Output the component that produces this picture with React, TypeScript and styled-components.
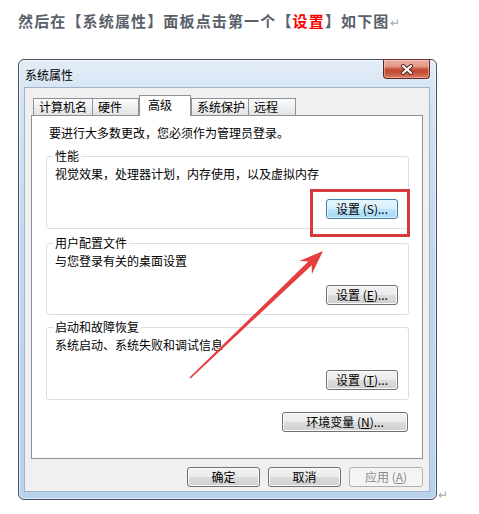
import React from "react";
import styled, { createGlobalStyle, css } from "styled-components";

const GlobalStyle = createGlobalStyle`
  html, body { margin: 0; padding: 0; background: #ffffff; }
  body { font-family: "Noto Sans CJK SC", "Noto Sans", sans-serif; }
  * { box-sizing: border-box; }
`;

const Page = styled.div`
  position: relative;
  width: 479px;
  height: 514px;
  padding: 11px 0 0 18px;
  overflow: hidden;
`;

const Heading = styled.p`
  margin: 0;
  height: 20px;
  line-height: 20px;
  font-size: 15px;
  font-weight: 700;
  color: #5a616b;
  letter-spacing: 1.15px;
  white-space: nowrap;
`;

const Red = styled.span`
  color: #ff0000;
`;

const ReturnMark = styled.span`
  font-weight: 400;
  font-size: 12px;
  line-height: 12px;
  color: #a6a6a6;
  margin-left: 1px;
  letter-spacing: 0;
`;

const WindowRow = styled.div`
  display: flex;
  align-items: flex-end;
  margin-top: 28px;
`;

const Window = styled.div`
  width: 419px;
  height: 441px;
  border: 1px solid #465263;
  border-radius: 6px;
  background: linear-gradient(
    180deg,
    #e4edf7 0%,
    #d6e4f3 7%,
    #c3d8ef 40%,
    #b9d2ec 100%
  );
  box-shadow: inset 0 0 0 1px rgba(255, 255, 255, 0.55);
  display: flex;
  flex-direction: column;
  padding: 0 6px 7px 5px;
`;

const TitleBar = styled.div`
  height: 27px;
  display: flex;
  justify-content: space-between;
  align-items: flex-start;
  flex-shrink: 0;
`;

const TitleText = styled.span`
  margin: 9px 0 0 1px;
  font-size: 12px;
  line-height: 12px;
  color: #000;
`;

const CloseButton = styled.div`
  width: 47px;
  height: 20px;
  margin-top: -1px;
  border: 1px solid #5a2a24;
  border-top-color: #6e3a32;
  border-radius: 0 0 4px 4px;
  background: linear-gradient(
    180deg,
    #eab0a3 0%,
    #e39a89 35%,
    #c8553f 50%,
    #c24a35 65%,
    #d77b62 100%
  );
  box-shadow: inset 0 0 0 1px rgba(255, 220, 210, 0.45);
  display: flex;
  align-items: center;
  justify-content: center;
`;

const Client = styled.div`
  flex: 1;
  background: #f0f0f0;
  border: 1px solid #9fb3ca;
  padding: 7px 6px 0 6px;
  display: flex;
  flex-direction: column;
`;

const TabStrip = styled.div`
  display: flex;
  align-items: flex-end;
  height: 21px;
  padding-left: 2px;
  margin-bottom: -1px;
  position: relative;
  z-index: 1;
`;

const Tab = styled.div<{ $w: number; $active?: boolean; $ml?: number }>`
  width: ${(p) => p.$w}px;
  margin-left: ${(p) => p.$ml ?? 0}px;
  height: 17px;
  margin-bottom: 1px;
  border: 1px solid #8e9198;
  border-bottom: none;
  background: linear-gradient(180deg, #fbfbfb 0%, #f0f0f0 50%, #e2e2e2 100%);
  font-size: 12px;
  line-height: 15px;
  color: #000;
  padding-left: 5px;
  white-space: nowrap;
  ${(p) =>
    p.$active &&
    css`
      height: 21px;
      margin-bottom: 0;
      background: #ffffff;
      line-height: 18px;
      padding-left: 8px;
    `}
`;

const Panel = styled.div`
  height: 344px;
  border: 1px solid #8e9198;
  background: #ffffff;
  padding: 9px 13px 0 14px;
  display: flex;
  flex-direction: column;
`;

const Intro = styled.div`
  margin-left: 3px;
  height: 16px;
  line-height: 16px;
  font-size: 12px;
  color: #000;
`;

const GroupBox = styled.div<{ $mt: number; $h: number }>`
  position: relative;
  margin-top: ${(p) => p.$mt}px;
  height: ${(p) => p.$h}px;
  border: 1px solid #d5dfe5;
  border-radius: 3px;
  padding: 9px 10px 9px 8px;
  display: flex;
  flex-direction: column;
  justify-content: space-between;
`;

const Legend = styled.span`
  position: absolute;
  top: -9px;
  left: 6px;
  padding: 0 2px;
  background: #ffffff;
  font-size: 12px;
  line-height: 16px;
  color: #000;
`;

const Desc = styled.div`
  font-size: 12px;
  line-height: 16px;
  color: #000;
`;

const Button = styled.button<{ $w: number; $focus?: boolean }>`
  width: ${(p) => p.$w}px;
  height: 20px;
  padding: 0;
  border: 1px solid #707070;
  border-radius: 3px;
  background: linear-gradient(
    180deg,
    #f2f2f2 0%,
    #ebebeb 49%,
    #dddddd 50%,
    #cfcfcf 100%
  );
  box-shadow: inset 0 0 0 1px #fbfbfb;
  font-family: "Noto Sans CJK SC", "Noto Sans", sans-serif;
  font-size: 12px;
  line-height: 18px;
  color: #000;
  white-space: nowrap;
  flex-shrink: 0;
  ${(p) =>
    p.$focus &&
    css`
      border-color: #3c7fb1;
      background: linear-gradient(
        180deg,
        #e8f6fd 0%,
        #d6effc 49%,
        #bde5fb 50%,
        #a5d8f4 100%
      );
      box-shadow: inset 0 0 0 1px #dff3fd;
    `}
  &:disabled {
    border-color: #adb2b5;
    background: #f4f4f4;
    box-shadow: none;
    color: #8a8a8a;
  }
`;

const GroupButton = styled(Button)`
  align-self: flex-end;
`;

const EnvRow = styled.div`
  display: flex;
  justify-content: flex-end;
  margin-top: 12px;
  padding-right: 1px;
`;

const FooterRow = styled.div`
  display: flex;
  justify-content: flex-end;
  gap: 8px;
  margin-top: 8px;
`;

const Key = styled.span`
  text-decoration: underline;
`;

const Overlay = styled.svg`
  position: absolute;
  top: 0;
  left: 0;
  pointer-events: none;
`;

const groups = [
  {
    title: "性能",
    desc: "视觉效果，处理器计划，内存使用，以及虚拟内存",
    key: "S",
    underline: false,
    focus: true,
    mt: 15,
    h: 73,
  },
  {
    title: "用户配置文件",
    desc: "与您登录有关的桌面设置",
    key: "E",
    underline: true,
    focus: false,
    mt: 14,
    h: 72,
  },
  {
    title: "启动和故障恢复",
    desc: "系统启动、系统失败和调试信息",
    key: "T",
    underline: true,
    focus: false,
    mt: 12,
    h: 73,
  },
];

const tabs = [
  { label: "计算机名", w: 60, ml: 0 },
  { label: "硬件", w: 47, ml: -1 },
  { label: "高级", w: 52, ml: 0, active: true },
  { label: "系统保护", w: 58, ml: 0 },
  { label: "远程", w: 48, ml: -1 },
];

export default function App() {
  return (
    <>
      <GlobalStyle />
      <Page>
        <Heading>
          然后在【系统属性】面板点击第一个【<Red>设置</Red>】如下图
          <ReturnMark>↵</ReturnMark>
        </Heading>
        <WindowRow>
          <Window>
            <TitleBar>
              <TitleText>系统属性</TitleText>
              <CloseButton>
                <svg width="14" height="11" viewBox="0 0 14 11">
                  <path
                    d="M3 2 L11 9 M11 2 L3 9"
                    stroke="#4a2620"
                    strokeWidth="4"
                    strokeLinecap="round"
                  />
                  <path
                    d="M3 2 L11 9 M11 2 L3 9"
                    stroke="#ffffff"
                    strokeWidth="2.2"
                    strokeLinecap="round"
                  />
                </svg>
              </CloseButton>
            </TitleBar>
            <Client>
              <TabStrip>
                {tabs.map((t) => (
                  <Tab key={t.label} $w={t.w} $ml={t.ml} $active={t.active}>
                    {t.label}
                  </Tab>
                ))}
              </TabStrip>
              <Panel>
                <Intro>要进行大多数更改，您必须作为管理员登录。</Intro>
                {groups.map((g) => (
                  <GroupBox key={g.title} $mt={g.mt} $h={g.h}>
                    <Legend>{g.title}</Legend>
                    <Desc>{g.desc}</Desc>
                    <GroupButton $w={72} $focus={g.focus}>
                      设置 ({g.underline ? <Key>{g.key}</Key> : g.key})...
                    </GroupButton>
                  </GroupBox>
                ))}
                <EnvRow>
                  <Button $w={126}>
                    环境变量 (<Key>N</Key>)...
                  </Button>
                </EnvRow>
              </Panel>
              <FooterRow>
                <Button $w={73}>确定</Button>
                <Button $w={73}>取消</Button>
                <Button $w={74} disabled>
                  应用 (<Key>A</Key>)
                </Button>
              </FooterRow>
            </Client>
          </Window>
          <ReturnMark>↵</ReturnMark>
        </WindowRow>
        <Overlay width="479" height="514" viewBox="0 0 479 514">
          <rect
            x="311.5"
            y="190.5"
            width="97"
            height="45"
            fill="none"
            stroke="#d8393c"
            strokeWidth="3"
          />
          <polygon
            points="323,251 311.9,274.1 311.7,265.2 190.6,378.6 189.4,377.4 308.3,261.6 299.4,261 "
            fill="#e53e3e"
          />
        </Overlay>
      </Page>
    </>
  );
}
